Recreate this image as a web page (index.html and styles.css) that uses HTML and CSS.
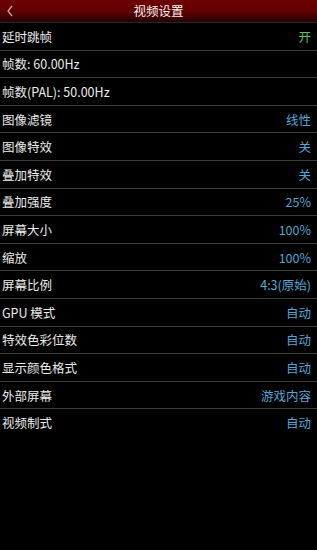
FILE: index.html
```html
<!DOCTYPE html>
<html>
<head>
<meta charset="utf-8">
<link rel="stylesheet" href="styles.css">
</head>
<body>
<div class="screen">
  <header class="bar">
    <svg class="back" width="8" height="12" viewBox="0 0 8 12"><path d="M6 1 L2 6 L6 11" fill="none" stroke="#c9a3a3" stroke-width="1.3"/></svg>
    <div class="title">视频设置</div>
  </header>
  <ul class="list">
    <li class="row"><span class="label">延时跳帧</span><span class="val on">开</span></li>
    <li class="row"><span class="label">帧数: 60.00Hz</span></li>
    <li class="row"><span class="label">帧数(PAL): 50.00Hz</span></li>
    <li class="row"><span class="label">图像滤镜</span><span class="val">线性</span></li>
    <li class="row"><span class="label">图像特效</span><span class="val">关</span></li>
    <li class="row"><span class="label">叠加特效</span><span class="val">关</span></li>
    <li class="row"><span class="label">叠加强度</span><span class="val">25%</span></li>
    <li class="row"><span class="label">屏幕大小</span><span class="val">100%</span></li>
    <li class="row"><span class="label">缩放</span><span class="val">100%</span></li>
    <li class="row"><span class="label">屏幕比例</span><span class="val">4:3(原始)</span></li>
    <li class="row"><span class="label">GPU 模式</span><span class="val">自动</span></li>
    <li class="row"><span class="label">特效色彩位数</span><span class="val">自动</span></li>
    <li class="row"><span class="label">显示颜色格式</span><span class="val">自动</span></li>
    <li class="row"><span class="label">外部屏幕</span><span class="val">游戏内容</span></li>
    <li class="row last"><span class="label">视频制式</span><span class="val">自动</span></li>
  </ul>
</div>
</body>
</html>
```
FILE: styles.css
```css
html, body {
  margin: 0;
  padding: 0;
  background: #000;
}
body {
  width: 317px;
  height: 550px;
  overflow: hidden;
  font-family: "Noto Sans CJK SC", "Noto Sans", sans-serif;
  color: #e8e8e8;
}
.screen {
  display: flex;
  flex-direction: column;
}
.bar {
  position: relative;
  height: 22px;
  display: flex;
  align-items: center;
  justify-content: center;
  background: linear-gradient(to bottom, #6e0000 0%, #620000 50%, #3a0000 85%, #1a0a0a 100%);
  border-bottom: 1px solid #2a2424;
}
.back {
  position: absolute;
  left: 6px;
  top: 5px;
}
.title {
  font-size: 12.5px;
  color: #f4f4f4;
  line-height: 22px;
}
.list {
  list-style: none;
  margin: 0;
  padding: 0;
}
.row {
  height: 26.6px;
  display: flex;
  align-items: center;
  justify-content: space-between;
  padding: 0 6px 0 2px;
  border-bottom: 1px solid #3c3c3c;
  font-size: 12.5px;
}
.row.last {
  border-bottom: none;
}
.label {
  color: #ececec;
}
.val {
  color: #52a7d6;
}
.val.on {
  color: #5fc060;
}
```
